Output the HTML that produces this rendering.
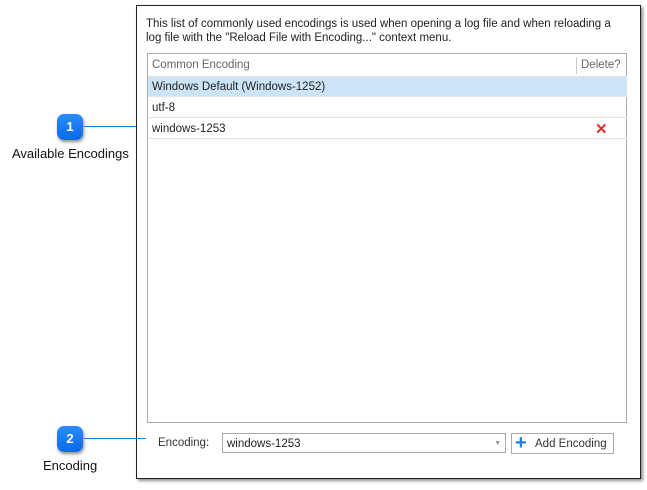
<!DOCTYPE html>
<html><head><style>
body{margin:0;width:647px;height:490px;background:#fff;position:relative;font-family:"Liberation Sans",sans-serif;overflow:hidden}
.a{position:absolute}
.f{font-family:"Liberation Sans",sans-serif;font-size:11.5px;color:#222}
.bub{position:absolute;width:26px;height:26px;border-radius:7px;background:linear-gradient(#2a8cff,#0a6ae8);color:#fff;font-size:13px;font-weight:bold;text-align:center;line-height:26px;box-shadow:1px 2px 3px rgba(0,0,0,.45)}
.row{position:absolute;left:0;width:479px;height:20px;border-bottom:1px solid #e4e4e4;line-height:21px;padding-left:4px;box-sizing:border-box}
</style></head><body>
<div class="a" style="left:136px;top:5px;width:503px;height:472px;border:1px solid #222;box-shadow:2px 2px 3px rgba(0,0,0,.45);background:#fff"></div>
<div class="a f" style="left:146px;top:17px;width:480px;line-height:14px">This list of commonly used encodings is used when opening a log file and when reloading a log file with the "Reload File with Encoding..." context menu.</div>
<div class="a f" style="left:147px;top:53px;width:478px;height:368px;border:1px solid #aaa">
 <div class="row" style="top:0;height:23px;line-height:23px;color:#666">Common Encoding</div>
 <div class="a" style="left:428px;top:3px;height:17px;border-left:1px solid #ccc"></div>
 <div class="a" style="left:433px;top:0;line-height:23px;color:#666">Delete?</div>
 <div class="row" style="top:23px;background:#cce4f7">Windows Default (Windows-1252)</div>
 <div class="row" style="top:43px;height:21px;line-height:22px">utf-8</div>
 <div class="row" style="top:64px;height:21px;line-height:22px">windows-1253</div>
 <div class="a" style="left:447px;top:66px;color:#e03030;font-size:15px;font-weight:bold;line-height:20px">✕</div>
</div>
<div class="a f" style="left:158px;top:437px;color:#333">Encoding:</div>
<div class="a f" style="left:222px;top:433px;border:1px solid #aaa;line-height:20px;padding-left:4px;box-sizing:border-box;width:284px;height:20px">windows-1253<span style="position:absolute;right:4px;top:0;color:#999;font-size:7px">▼</span></div>
<div class="a f" style="left:511px;top:433px;width:103px;height:21px;border:1px solid #aaa;box-sizing:border-box;line-height:20px"><span style="color:#1a7fd9;font-size:20px;font-weight:bold;position:absolute;left:3px;top:-1px">+</span><span style="position:absolute;left:23px;color:#333">Add Encoding</span></div>
<div class="bub" style="left:57px;top:114px">1</div>
<div class="a" style="left:84px;top:126px;width:52px;border-top:1px solid #1a7fd9"></div>
<div class="a" style="left:12px;top:146px;font-size:13px;color:#111">Available Encodings</div>
<div class="bub" style="left:57px;top:426px">2</div>
<div class="a" style="left:84px;top:438px;width:62px;border-top:1px solid #1a7fd9"></div>
<div class="a" style="left:43px;top:458px;font-size:13px;color:#111">Encoding</div>
</body></html>
